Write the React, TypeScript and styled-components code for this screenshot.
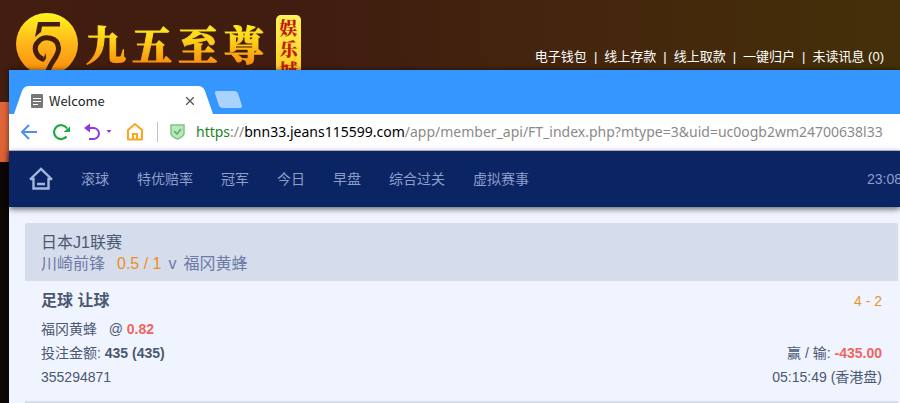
import React from "react";
import styled, { createGlobalStyle } from "styled-components";

const GlobalStyle = createGlobalStyle`
  *, *::before, *::after { box-sizing: border-box; }
  body { margin: 0; background: #0d0806; overflow: hidden; }
  button, input { font: inherit; }
`;

const sans = `"Liberation Sans", "Noto Sans CJK SC", sans-serif`;

const Page = styled.div`
  min-height: 100vh;
  display: flex;
  flex-direction: column;
  overflow: hidden;
  font-family: ${sans};
  background:
    linear-gradient(#e0653a, #dd6236) 0 102px / 100% 60px no-repeat,
    linear-gradient(90deg, #421d10 0%, #401d10 35%, #44240e 60%, #443008 100%) 0 0 / 100% 102px no-repeat,
    #0d0806;
`;

const SiteHeader = styled.header`
  height: 70px;
  display: flex;
  justify-content: space-between;
  align-items: flex-start;
  padding: 0 16px;
  overflow: hidden;
`;

const Brand = styled.a`
  display: flex;
  align-items: flex-start;
  text-decoration: none;
`;

const Emblem = styled.svg`
  flex: none;
  margin-top: 13px;
`;

const BrandName = styled.span`
  display: flex;
  gap: 6px;
  margin: 14px 0 0 7px;
  font: 900 40px/58px "Noto Serif CJK SC", "Noto Sans CJK SC", serif;
  color: transparent;
  background: linear-gradient(#fff21c 15%, #ffcb18 50%, #f98b0b 88%);
  background-clip: text;
  -webkit-background-clip: text;
  -webkit-text-stroke: 1px transparent;
`;

const BrandTag = styled.span`
  display: flex;
  flex-direction: column;
  align-items: center;
  width: 25px;
  height: 72px;
  margin: 15px 0 0 12px;
  padding-top: 2px;
  border-radius: 5px;
  background: linear-gradient(#fff45a, #ffd72c 60%, #fbb02a);
  color: #c51a08;
  font: 900 18px/21px "Noto Serif CJK SC", "Noto Sans CJK SC", serif;
`;

const AccountNav = styled.nav`
  display: flex;
  padding-top: 48px;
  font-size: 13px;
  line-height: 18px;
  color: #fff;
  white-space: nowrap;
`;

const AccountLink = styled.a`
  color: #fff;
  text-decoration: none;
  & + &::before { content: "|"; margin: 0 7px; }
`;

const BrowserWindow = styled.div`
  flex: 1;
  display: flex;
  flex-direction: column;
  margin-left: 9px;
  background: #f0f4fe;
  box-shadow: 0 0 5px rgba(0, 0, 0, 0.6);
`;

const TabStrip = styled.div`
  height: 44px;
  display: flex;
  align-items: flex-end;
  background: #3696ff;
`;

const Tab = styled.div`
  position: relative;
  isolation: isolate;
  width: 206px;
  height: 28px;
  display: flex;
  align-items: center;
  padding: 2px 21px 0 22px;
  color: #222;
  font: 13px/18px "Noto Sans CJK SC", "Noto Sans", sans-serif;
`;

const TabShape = styled.svg`
  position: absolute;
  inset: 0;
  z-index: -1;
  width: 100%;
  height: 100%;
`;

const TabTitle = styled.span`
  flex: 1;
  margin-left: 6px;
`;

const IconButton = styled.button`
  display: flex;
  flex: none;
  padding: 0;
  border: 0;
  background: none;
  cursor: pointer;
`;

const NewTab = styled.button`
  width: 23px;
  height: 17px;
  margin: 0 0 6px 2px;
  padding: 0;
  border: 0;
  border-radius: 3px;
  background: #a9d2ff;
  transform: skewX(18deg);
`;

const Toolbar = styled.div`
  height: 37px;
  display: flex;
  align-items: center;
  padding-left: 11px;
  background: #fff;
  border-bottom: 1px solid #c3c8d4;
`;

const ToolButtons = styled.div`
  display: flex;
  align-items: center;
  gap: 14px;
  padding-right: 13px;
  margin-right: 12px;
  border-right: 1px solid #c4c4c4;
`;

const Address = styled.div`
  flex: 1;
  min-width: 0;
  margin-left: 11px;
  overflow: hidden;
  white-space: nowrap;
  color: #8a8a8a;
  font: 14px/22px "Noto Sans", "Open Sans", sans-serif;
`;

const Scheme = styled.span`color: #1c861c;`;
const Host = styled.span`color: #000;`;

const SportsNav = styled.nav`
  position: relative;
  height: 56px;
  display: flex;
  flex: none;
  align-items: center;
  gap: 28px;
  padding-left: 20px;
  background: #0b2463;
  box-shadow: 0 2px 6px rgba(0, 0, 0, 0.6);
  color: #8c9fcb;
  font-size: 14px;
  line-height: 20px;
  white-space: nowrap;
`;

const SportsLink = styled.a`
  color: inherit;
  text-decoration: none;
  display: flex;
`;

const Clock = styled.time`
  width: 33px;
  margin-left: auto;
`;

const Content = styled.main`
  flex: 1;
  padding: 16px 2px 0 16px;
  color: #4b5871;
`;

const MatchHeader = styled.header`
  padding: 9px 16px 7px;
  border-radius: 2px 2px 0 0;
  background: #d5dceb;
  font-size: 16px;
  line-height: 21px;
`;

const League = styled.div``;

const Teams = styled.div`
  display: flex;
  color: #6c7aa5;
  white-space: pre;
`;

const Handicap = styled.span`
  margin: 0 7px 0 12px;
  color: #f08c22;
`;

const Versus = styled.span`
  margin-right: 7px;
`;

const Bet = styled.section`
  padding: 8px 16px 12px;
  border-bottom: 2px solid #d5dceb;
  font-size: 14px;
  line-height: 24px;
`;

const BetRow = styled.div`
  display: flex;
  justify-content: space-between;
  & > * { white-space: pre; }
`;

const BetType = styled.h2`
  margin: 0 0 4px;
  font-size: 16px;
  line-height: 24px;
`;

const Score = styled.span`color: #e8922e;`;
const Red = styled.strong`color: #ee6661;`;

const accountItems = ["电子钱包", "线上存款", "线上取款", "一键归户", "未读讯息 (0)"];
const sportsItems = ["滚球", "特优赔率", "冠军", "今日", "早盘", "综合过关", "虚拟赛事"];

export default function App() {
  return (
    <>
      <GlobalStyle />
      <Page>
        <SiteHeader>
          <Brand href="#">
            <Emblem width="63" height="63" viewBox="0 0 63 63" aria-hidden="true">
              <defs>
                <linearGradient id="gold" x1="0" y1="0" x2="0" y2="1">
                  <stop offset="0" stopColor="#fff51e" />
                  <stop offset="0.5" stopColor="#ffb51b" />
                  <stop offset="1" stopColor="#fa8a0b" />
                </linearGradient>
              </defs>
              <circle cx="31" cy="31" r="31" fill="url(#gold)" />
              <path d="M22 9H44V13.500H26L25 19L19 24Z" fill="#421d10" />
              <path d="M27 46C19 43 17 34 22 29C28 22 42 24 42.500 35C43 44 34 48 31 61" fill="none" stroke="#421d10" strokeWidth="5" />
              <path d="M24 47Q29 46 29 40Q32 46 27 49Z" fill="#421d10" />
            </Emblem>
            <BrandName>
              {[..."九五至尊"].map((c) => <span key={c}>{c}</span>)}
            </BrandName>
            <BrandTag>
              {[..."娱乐城"].map((c) => <span key={c}>{c}</span>)}
            </BrandTag>
          </Brand>
          <AccountNav>
            {accountItems.map((t) => <AccountLink href="#" key={t}>{t}</AccountLink>)}
          </AccountNav>
        </SiteHeader>

        <BrowserWindow>
          <TabStrip>
            <Tab>
              <TabShape viewBox="0 0 206 28" preserveAspectRatio="none" aria-hidden="true">
                <path d="M5 28L13 5Q15 0 20 0H189Q194 0 196 5L204 28Z" fill="#fff" />
              </TabShape>
              <svg width="12" height="14" viewBox="0 0 12 14" aria-hidden="true">
                <rect width="12" height="14" rx="1" fill="#777" />
                <path d="M2 4.500H10M2 7.500H10M2 10.500H7" stroke="#fff" />
              </svg>
              <TabTitle>Welcome</TabTitle>
              <IconButton aria-label="Close tab">
                <svg width="8" height="8" viewBox="0 0 8 8"><path d="M0 0L8 8M8 0L0 8" stroke="#555" strokeWidth="1.300" /></svg>
              </IconButton>
            </Tab>
            <NewTab aria-label="New tab" />
          </TabStrip>

          <Toolbar>
            <ToolButtons>
              <IconButton aria-label="Back">
                <svg width="18" height="20" viewBox="0 0 18 20" fill="none" stroke="#4a90f0" strokeWidth="2"><path d="M17 10H2M9 3L2 10L9 17" /></svg>
              </IconButton>
              <IconButton aria-label="Reload">
                <svg width="18" height="20" viewBox="0 0 18 20" fill="none" stroke="#1cab40" strokeWidth="2.200"><path d="M14.500 14.500A7 7 0 1 1 15 6.500" /><path d="M18 4.500V10H11.500Z" fill="#1cab40" stroke="none" /></svg>
              </IconButton>
              <IconButton aria-label="Undo">
                <svg width="28" height="20" viewBox="0 0 28 20" fill="none" stroke="#9038e2" strokeWidth="2"><path d="M3 6H9.500A5.500 5.500 0 0 1 9.500 17H5" /><path d="M0 6L6 1.500V10.500Z" fill="#9038e2" stroke="none" /><path d="M22.500 8H27.500L25 11Z" fill="#9038e2" stroke="none" /></svg>
              </IconButton>
              <IconButton aria-label="Home">
                <svg width="18" height="20" viewBox="0 0 18 20" fill="none" stroke="#fba61d" strokeWidth="2"><path d="M2 8L9 2L16 8V17.500H2Z" strokeLinejoin="round" /><path d="M7 17V12H11V17" /></svg>
              </IconButton>
            </ToolButtons>
            <svg width="15" height="16" viewBox="0 0 15 16" aria-hidden="true"><path d="M1 1H14V10Q13 13 7.500 15Q2 13 1 10Z" fill="#b9e8bc" stroke="#79c880" strokeWidth="1.500" /><path d="M4 7L7 10L11 5" fill="none" stroke="#5bb465" strokeWidth="1.600" /></svg>
            <Address>
              <Scheme>https</Scheme>://<Host>bnn33.jeans115599.com</Host>/app/member_api/FT_index.php?mtype=3&amp;uid=uc0ogb2wm24700638l33
            </Address>
          </Toolbar>

          <SportsNav>
            <SportsLink href="#" aria-label="Home">
              <svg width="24" height="24" viewBox="0 0 24 24" fill="none" stroke="#a5b6dd" strokeWidth="2.400"><path d="M1 12.500L12 2L23 12.500M1 12H4.500V21.500H19.500V12H23M8 17H16" /></svg>
            </SportsLink>
            {sportsItems.map((t) => <SportsLink href="#" key={t}>{t}</SportsLink>)}
            <Clock>23:08</Clock>
          </SportsNav>

          <Content>
            <MatchHeader>
              <League>日本J1联赛</League>
              <Teams>
                川崎前锋<Handicap>0.5 / 1</Handicap><Versus>v</Versus>福冈黄蜂
              </Teams>
            </MatchHeader>
            <Bet>
              <BetRow><BetType>足球 让球</BetType><Score>4 - 2</Score></BetRow>
              <BetRow><span>福冈黄蜂{"   "}@ <Red>0.82</Red></span></BetRow>
              <BetRow>
                <span>投注金额: <strong>435 (435)</strong></span>
                <span>赢 / 输: <Red>-435.00</Red></span>
              </BetRow>
              <BetRow><span>355294871</span><span>05:15:49 (香港盘)</span></BetRow>
            </Bet>
          </Content>
        </BrowserWindow>
      </Page>
    </>
  );
}
